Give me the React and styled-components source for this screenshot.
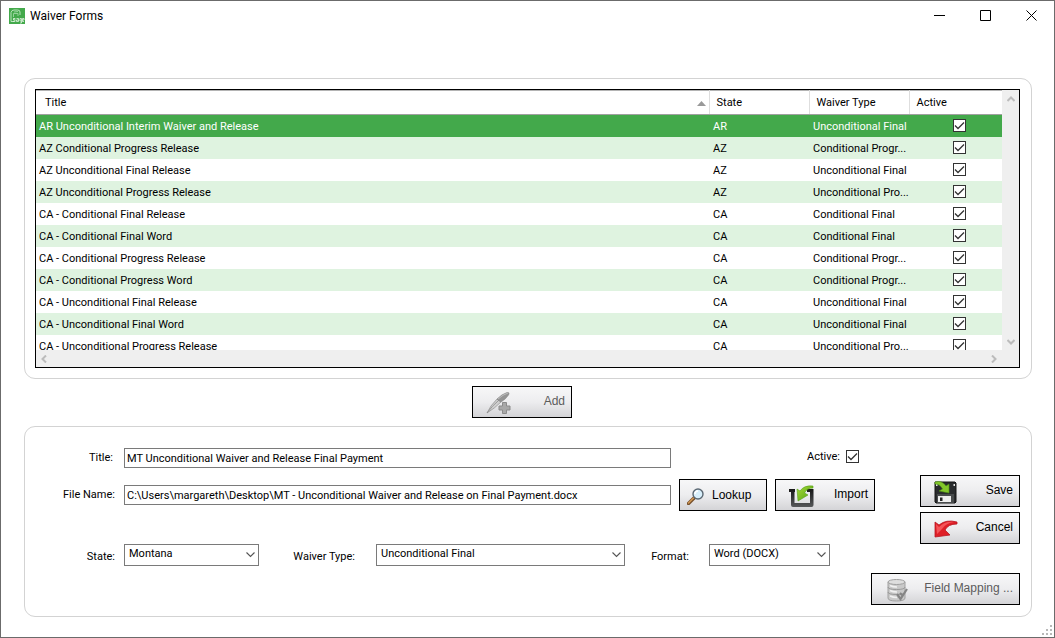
import React from 'react'
import styled, { createGlobalStyle, ThemeProvider } from 'styled-components'

const theme = {
  text: '#000000',
  textMuted: '#5c5c5c',
  windowBorder: '#6b6b6b',
  panelBorder: '#d3d3d3',
  fieldBorder: '#7a7a7a',
  brand: '#43a94b',
  stripe: '#dff3e0',
  scrollbar: '#efefef'
}

const GlobalStyle = createGlobalStyle`
  * {
    box-sizing: border-box;
  }
  body {
    margin: 0;
    background: #ffffff;
    font-family: Roboto, 'Liberation Sans', sans-serif;
    font-size: 11px;
    line-height: 16px;
  }
  button, input, select {
    font: inherit;
    color: inherit;
  }
`
const Window = styled.div`
  min-height: 100vh;
  display: flex;
  flex-direction: column;
  border: 1px solid ${p => p.theme.windowBorder};
  color: ${p => p.theme.text};
`
const TitleBar = styled.header`
  display: flex;
  align-items: center;
  height: 29px;
  padding-left: 8px;
`
const WindowTitle = styled.h1`
  flex: 1;
  margin: 0 0 0 5px;
  font-size: 12px;
  font-weight: 400;
`
const WindowButton = styled.button`
  width: 46px;
  height: 29px;
  padding: 0;
  border: 0;
  background: transparent;

  svg {
    display: block;
    margin: auto;
  }
`
const Content = styled.main`
  flex: 1;
  padding: 48px 22px 0 23px;
`
const Panel = styled.section`
  border: 1px solid ${p => p.theme.panelBorder};
  border-radius: 11px;
  padding: 10px 11px 10px 10px;
`
const GridFrame = styled.div`
  display: grid;
  grid-template-columns: 1fr 17px;
  grid-template-rows: 260px 17px;
  border: 1px solid #000000;
`
const GridView = styled.div`
  overflow: hidden;
`
const Table = styled.table`
  width: 100%;
  table-layout: fixed;
  border-collapse: collapse;
  border-top: 1px solid #b4b4b4;
`
const HeadCell = styled.th`
  width: ${p => p.$width || 'auto'};
  height: 24px;
  padding: 1px 3px 0 ${p => (p.$first ? 9 : 7)}px;
  border-bottom: 1px solid #a0a0a0;
  border-left: ${p => (p.$first ? 0 : '1px solid #dedede')};
  font-weight: 400;
  text-align: left;
`
const HeadLabel = styled.span`
  display: flex;
  align-items: center;
  justify-content: space-between;
`
const Row = styled.tr`
  height: 22px;
  color: ${p => (p.$selected ? '#ffffff' : 'inherit')};
  background: ${p => (p.$selected ? p.theme.brand : '#ffffff')};

  &:nth-child(even) {
    background: ${p => p.theme.stripe};
  }
`
const Cell = styled.td`
  padding: 3px 0 0 4px;
  white-space: nowrap;
  overflow: hidden;

  &:first-child {
    padding-left: 3px;
  }
`
const CheckCell = styled.td`
  padding: 0 0 0 7px;
  text-align: center;
`
const CheckBox = styled.span`
  display: inline-grid;
  vertical-align: middle;
  color: #333333;

  input, svg {
    grid-area: 1 / 1;
    display: block;
    width: 13px;
    height: 13px;
    margin: 0;
  }
  input {
    appearance: none;
    border: 1px solid #333333;
    background: #ffffff;
  }
  svg {
    z-index: 1;
    pointer-events: none;
  }
  input:not(:checked) + svg {
    visibility: hidden;
  }
`
const ScrollTrack = styled.div`
  display: flex;
  flex-direction: ${p => (p.$horizontal ? 'row' : 'column')};
  justify-content: space-between;
  align-items: center;
  padding: ${p => (p.$horizontal ? '0 4px' : '5px 0 4px')};
  background: ${p => p.theme.scrollbar};
`
const ScrollCorner = styled.div`
  background: ${p => p.theme.scrollbar};
`
const AddBar = styled.div`
  display: flex;
  justify-content: center;
  padding: 7px 12px 8px 0;
`
const ActionButton = styled.button`
  display: flex;
  align-items: center;
  justify-content: space-between;
  width: ${p => p.$width}px;
  height: 32px;
  padding: 0 6px 2px ${p => p.$inset || 13}px;
  border: 1px solid #000000;
  background: linear-gradient(#f7f7f8, #ededef 50%, #d4d4d7);
  color: ${p => (p.disabled ? p.theme.textMuted : p.theme.text)};
  font-family: 'Liberation Sans', Arial, sans-serif;
  font-size: 12px;
  white-space: nowrap;

  svg {
    margin-top: 4px;
  }
`
const LookupButton = styled(ActionButton)`
  justify-content: flex-start;
  padding: 0 0 0 7px;
  gap: 8px;

  svg {
    margin-top: 2px;
  }
`
const FormBody = styled.div`
  display: flex;
  justify-content: space-between;
  gap: 45px;
`
const Fields = styled.div`
  flex: 1;
  padding-top: 6px;
`
const FieldRow = styled.div`
  display: flex;
  align-items: center;
  height: ${p => p.$height}px;
`
const Label = styled.label`
  flex: none;
  width: ${p => p.$width}px;
  padding-right: ${p => p.$pad || 9}px;
  text-align: right;
`
const SelectRow = styled.div`
  display: flex;
  align-items: center;
  padding: 27px 45px 0 0;

  ${Label} {
    padding-top: 4px;
  }
`
const TextInput = styled.input`
  flex: 1;
  min-width: 0;
  height: 20px;
  padding: 0 2px;
  border: 1px solid ${p => p.theme.fieldBorder};
  background: #ffffff;
`
const Trailing = styled.div`
  display: flex;
  align-items: center;
  justify-content: ${p => (p.$end ? 'flex-end' : 'space-between')};
  gap: ${p => (p.$end ? 6 : 8)}px;
  width: 204px;
  padding: ${p => (p.$end ? '0 16px 3px 0' : '0 0 0 8px')};
`
const SelectBox = styled.div`
  position: relative;
  flex: ${p => (p.$width ? 'none' : 1)};
  width: ${p => (p.$width ? `${p.$width}px` : 'auto')};

  select {
    display: block;
    appearance: none;
    width: 100%;
    height: 22px;
    padding: 0 20px 2px 4px;
    border: 1px solid ${p => p.theme.fieldBorder};
    border-radius: 0;
    background: #ffffff;
  }
  svg {
    position: absolute;
    top: 8px;
    right: 4px;
    pointer-events: none;
  }
`
const Actions = styled.div`
  display: flex;
  flex-direction: column;
  gap: 5px;
  padding-top: 38px;
`
const FormFooter = styled.div`
  display: flex;
  justify-content: flex-end;
  padding: 7px 0 1px;
`
const SizeGrip = styled.footer`
  display: flex;
  justify-content: flex-end;
  padding: 0 2px 2px;
`

const AppIcon = () => (
  <svg width="16" height="16" viewBox="0 0 16 16">
    <rect width="16" height="16" fill="#43a94b" />
    <path d="M2 13.500V4.500Q2.500 2 5 2H8.500Q11 2 11 4V7M2 13.500H5" fill="none" stroke="#b8e3bb" />
    <path d="M4.500 9V5.500H9V8M4 11H7M9 3.500L5 4" fill="none" stroke="#94d299" />
    <path
      d="M6 10.500H4.500V12H6V13.500H4M7.500 10.500H9.500V13.500H7.500V12H9.500M12.500 13H11V10.500H12.500V15H11M15 13.500H13.500V10.500H15V12H13.500"
      fill="none"
      stroke="#dff3e0"
      strokeWidth=".8"
    />
  </svg>
)

const Tick = () => (
  <svg viewBox="0 0 13 13" fill="none" stroke="currentColor" strokeWidth="1.3">
    <path d="M2 6.500L5 9.500L11 3.500" />
  </svg>
)

const Check = ({ id, label }) => (
  <CheckBox>
    <input id={id} type="checkbox" aria-label={label} defaultChecked />
    <Tick />
  </CheckBox>
)

const arrowTurns = { down: 0, left: 90, up: 180, right: 270 }

const ScrollArrow = ({ direction }) => (
  <svg width="8" height="8" viewBox="0 0 8 8" fill="none" stroke="#bcbcbc" strokeWidth="2">
    <path d="M0.500 2L4 5.500L7.500 2" transform={`rotate(${arrowTurns[direction]} 4 4)`} />
  </svg>
)

const Chevron = () => (
  <svg width="9" height="6" viewBox="0 0 9 6" fill="none" stroke="#555555" strokeWidth="1.1">
    <path d="M0.500 0.500L4.500 4.500L8.500 0.500" />
  </svg>
)

const PenPlusIcon = () => (
  <svg width="25" height="24" viewBox="0 0 25 24">
    <path d="M1 22Q4 15 11 8L15 11Q9 17 1 22Z" fill="#cfcfcf" stroke="#909090" strokeWidth=".7" />
    <path d="M1 22Q6 15 13 9" fill="none" stroke="#8c8c8c" strokeWidth=".8" />
    <path d="M11 8Q16 3 21 1.500Q24 1 22.500 4Q20 8 15 11Z" fill="#949494" stroke="#858585" strokeWidth=".6" />
    <path d="M12 8Q17 3.500 22 2" fill="none" stroke="#bdbdbd" />
    <path d="M16.500 11.500H20.500V15H24V19H20.500V22.500H16.500V19H13V15H16.500Z" fill="#a8a8a8" stroke="#8b8b8b" />
  </svg>
)

const MagnifierIcon = () => (
  <svg width="17" height="17" viewBox="0 0 17 17">
    <path d="M1.500 15.500L7 10" stroke="#76512d" strokeWidth="3.400" strokeLinecap="round" />
    <path d="M1.500 15L6.500 10" stroke="#d59a55" strokeWidth="1.500" strokeLinecap="round" />
    <circle cx="11" cy="6" r="5" fill="#d8effb" stroke="#5b6873" strokeWidth="1.400" />
    <path d="M8 6Q8 3 11 3" fill="none" stroke="#ffffff" strokeWidth="1.500" />
  </svg>
)

const ImportIcon = () => (
  <svg width="25" height="23" viewBox="0 0 25 23">
    <defs>
      <linearGradient id="tray" x2="0" y2="1">
        <stop stopColor="#161616" />
        <stop offset="1" stopColor="#56585a" />
      </linearGradient>
      <linearGradient id="leaf" x2="1" y2="1">
        <stop stopColor="#a9dc3b" />
        <stop offset="1" stopColor="#4e9e0c" />
      </linearGradient>
    </defs>
    <path d="M0 4H6V7H5.500V18H21V7H18V4H24.500V20Q24.500 22 22.500 22H4Q2 22 2 20V7H0Z" fill="url(#tray)" />
    <path d="M9 16L8 4L11 6Q15 0 24 1V3Q18 3 15.500 8L19 10Z" fill="url(#leaf)" stroke="#559f19" strokeWidth=".6" />
  </svg>
)

const SaveIcon = () => (
  <svg width="23" height="23" viewBox="0 0 23 23">
    <path d="M1 1H21L22 2V21L21 22H2L1 21Z" fill="#292b2d" stroke="#151515" />
    <path d="M3 13H20V22H3Z" fill="#484b4c" />
    <path d="M4 15H17V21H4Z" fill="#eeeeee" />
    <path d="M6 16.500H8.500V20H6Z" fill="#252525" />
    <path d="M2 3H3.500V5H2ZM19.500 3H21V5H19.500Z" fill="#e8e8e8" />
    <path d="M1 1Q8-1 12 5L15 3V12L5 10L8.500 8Q6 3 1 3Z" fill="#83c72a" stroke="#4e9116" strokeWidth=".6" />
  </svg>
)

const CancelIcon = () => (
  <svg width="24" height="18" viewBox="0 0 24 18">
    <path d="M1 2L5 5Q12-1 23 2V4Q14 4 11 10L16 15L1 17Z" fill="#df1f27" stroke="#b71823" strokeWidth=".8" />
    <path d="M2 4L5 7Q11 1 20 2Q12 3 8 9L3 14Z" fill="#f4555a" />
  </svg>
)

const DatabaseIcon = () => (
  <svg width="21" height="23" viewBox="0 0 21 23">
    <path d="M1 3V19Q1 22 9.500 22Q18 22 18 19V3Z" fill="#c9c9c9" stroke="#a0a0a0" />
    <ellipse cx="9.500" cy="3" rx="8.500" ry="2.500" fill="#dedede" stroke="#a0a0a0" />
    <path d="M1 8Q1 10.500 9.500 10.500Q18 10.500 18 8M1 13Q1 15.500 9.500 15.500Q18 15.500 18 13" fill="none" stroke="#999999" />
    <path d="M3 6.500Q6 8 10 8M3 11.500Q6 13 10 13M3 17Q6 18.500 10 18.500" fill="none" stroke="#f1f1f1" strokeWidth="1.500" />
    <path d="M10 15L13.500 20L20 10M13 14L16 17" fill="none" stroke="#858585" strokeWidth="2.200" />
  </svg>
)

const waivers = [
  ['AR Unconditional Interim Waiver and Release', 'AR', 'Unconditional Final'],
  ['AZ Conditional Progress Release', 'AZ', 'Conditional Progr...'],
  ['AZ Unconditional Final Release', 'AZ', 'Unconditional Final'],
  ['AZ Unconditional Progress Release', 'AZ', 'Unconditional Pro...'],
  ['CA - Conditional Final Release', 'CA', 'Conditional Final'],
  ['CA - Conditional Final Word', 'CA', 'Conditional Final'],
  ['CA - Conditional Progress Release', 'CA', 'Conditional Progr...'],
  ['CA - Conditional Progress Word', 'CA', 'Conditional Progr...'],
  ['CA - Unconditional Final Release', 'CA', 'Unconditional Final'],
  ['CA - Unconditional Final Word', 'CA', 'Unconditional Final'],
  ['CA - Unconditional Progress Release', 'CA', 'Unconditional Pro...']
]

const WaiverGrid = () => (
  <GridFrame>
    <GridView>
      <Table>
        <thead>
          <tr>
            <HeadCell $first>
              <HeadLabel>
                Title
                <svg width="9" height="5" viewBox="0 0 9 5">
                  <path d="M0 5L4.500 0L9 5Z" fill="#999999" />
                </svg>
              </HeadLabel>
            </HeadCell>
            <HeadCell $width="100px">State</HeadCell>
            <HeadCell $width="100px">Waiver Type</HeadCell>
            <HeadCell $width="93px">Active</HeadCell>
          </tr>
        </thead>
        <tbody>
          {waivers.map(([title, state, type], i) => (
            <Row key={title} $selected={i === 0}>
              <Cell>{title}</Cell>
              <Cell>{state}</Cell>
              <Cell>{type}</Cell>
              <CheckCell>
                <Check label={`${title} active`} />
              </CheckCell>
            </Row>
          ))}
        </tbody>
      </Table>
    </GridView>
    <ScrollTrack>
      <ScrollArrow direction="up" />
      <ScrollArrow direction="down" />
    </ScrollTrack>
    <ScrollTrack $horizontal>
      <ScrollArrow direction="left" />
      <ScrollArrow direction="right" />
    </ScrollTrack>
    <ScrollCorner />
  </GridFrame>
)

const Select = ({ id, value, width }) => (
  <SelectBox $width={width}>
    <select id={id} defaultValue={value}>
      <option>{value}</option>
    </select>
    <Chevron />
  </SelectBox>
)

const WaiverForm = () => (
  <Panel as="form" onSubmit={e => e.preventDefault()}>
    <FormBody>
      <Fields>
        <FieldRow $height={30}>
          <Label htmlFor="title" $width={89} $pad={11}>Title:</Label>
          <TextInput id="title" defaultValue="MT Unconditional Waiver and Release Final Payment" />
          <Trailing $end>
            <label htmlFor="active">Active:</label>
            <Check id="active" />
          </Trailing>
        </FieldRow>
        <FieldRow $height={44}>
          <Label htmlFor="file" $width={89}>File Name:</Label>
          <TextInput
            id="file"
            defaultValue="C:\Users\margareth\Desktop\MT - Unconditional Waiver and Release on Final Payment.docx"
          />
          <Trailing>
            <LookupButton type="button" $width={88}>
              <MagnifierIcon />
              Lookup
            </LookupButton>
            <ActionButton type="button" $width={100}>
              <ImportIcon />
              Import
            </ActionButton>
          </Trailing>
        </FieldRow>
        <SelectRow>
          <Label htmlFor="state" $width={89}>State:</Label>
          <Select id="state" value="Montana" width={135} />
          <Label htmlFor="type" $width={117} $pad={21}>Waiver Type:</Label>
          <Select id="type" value="Unconditional Final" />
          <Label htmlFor="format" $width={84} $pad={20}>Format:</Label>
          <Select id="format" value="Word (DOCX)" width={121} />
        </SelectRow>
      </Fields>
      <Actions>
        <ActionButton type="submit" $width={100}>
          <SaveIcon />
          Save
        </ActionButton>
        <ActionButton type="button" $width={100}>
          <CancelIcon />
          Cancel
        </ActionButton>
      </Actions>
    </FormBody>
    <FormFooter>
      <ActionButton type="button" $width={149} $inset={15} disabled>
        <DatabaseIcon />
        Field Mapping ...
      </ActionButton>
    </FormFooter>
  </Panel>
)

const App = () => (
  <ThemeProvider theme={theme}>
    <GlobalStyle />
    <Window>
      <TitleBar>
        <AppIcon />
        <WindowTitle>Waiver Forms</WindowTitle>
        <WindowButton aria-label="Minimize">
          <svg width="11" height="11" stroke="#000000">
            <path d="M0 5.500H11" />
          </svg>
        </WindowButton>
        <WindowButton aria-label="Maximize">
          <svg width="11" height="11" stroke="#000000" fill="none">
            <path d="M0.500 0.500H10.500V10.500H0.500Z" />
          </svg>
        </WindowButton>
        <WindowButton aria-label="Close">
          <svg width="11" height="11" stroke="#000000">
            <path d="M0.500 0.500L10.500 10.500M10.500 0.500L0.500 10.500" />
          </svg>
        </WindowButton>
      </TitleBar>
      <Content>
        <Panel>
          <WaiverGrid />
        </Panel>
        <AddBar>
          <ActionButton type="button" $width={100} disabled>
            <PenPlusIcon />
            Add
          </ActionButton>
        </AddBar>
        <WaiverForm />
      </Content>
      <SizeGrip>
        <svg width="10" height="10" fill="#b8b8b8">
          <path d="M8 0H10V2H8ZM4 4H6V6H4ZM8 4H10V6H8ZM0 8H2V10H0ZM4 8H6V10H4ZM8 8H10V10H8Z" />
        </svg>
      </SizeGrip>
    </Window>
  </ThemeProvider>
)

export default App
